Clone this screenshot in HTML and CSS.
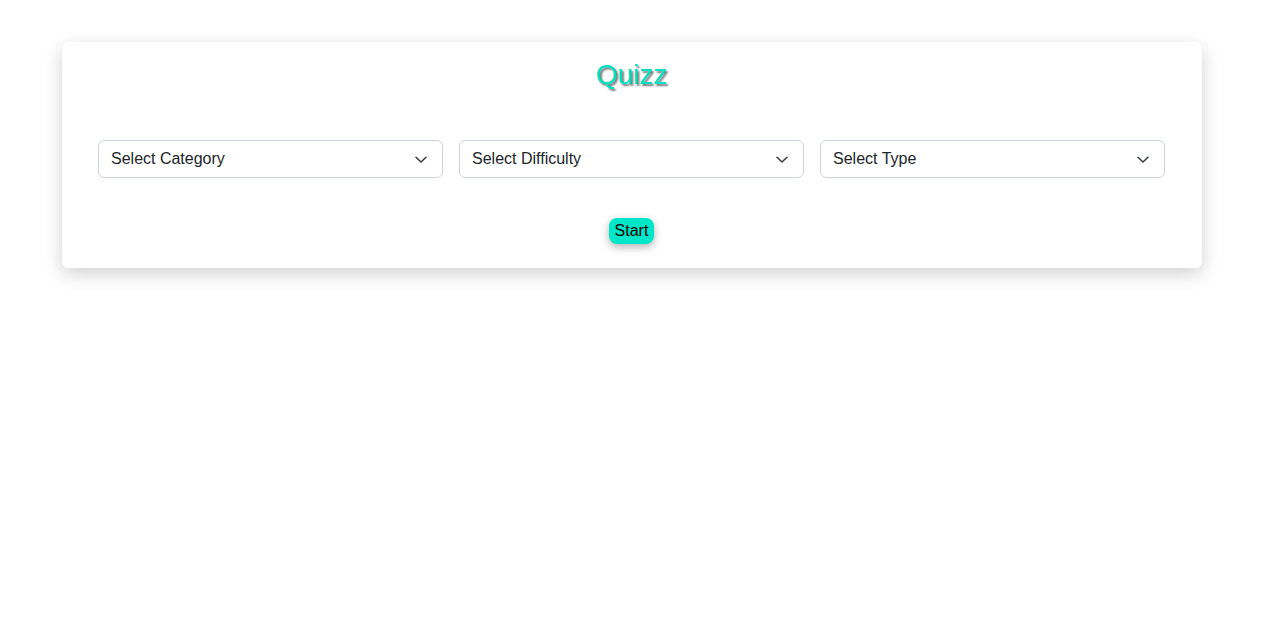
FILE: index.html
```html
<!DOCTYPE html>
<html lang="en">
<head>
<meta charset="utf-8">
<title>Quizz</title>
<link rel="stylesheet" href="styles.css">
</head>
<body>
<div class="card">
  <h1 class="title">Quizz</h1>
  <div class="selects">
    <select class="form-select"><option>Select Category</option></select>
    <select class="form-select"><option>Select Difficulty</option></select>
    <select class="form-select"><option>Select Type</option></select>
  </div>
  <div class="actions">
    <button class="start">Start</button>
  </div>
</div>
</body>
</html>
```
FILE: styles.css
```css
html {
  min-height: 100%;
}
body {
  margin: 0;
  min-height: 625px;
  font-family: "Liberation Sans", Arial, sans-serif;
  background: #ffffff;
  color: #212529;
}
.card {
  width: 1140px;
  box-sizing: border-box;
  margin: 42px 0 0 62px;
  background: #fff;
  border-radius: 6px;
  box-shadow: 0 6px 18px rgba(0, 0, 0, 0.18);
  padding: 15px 37px 24px 36px;
}
.title {
  margin: 0;
  text-align: center;
  font-size: 28px;
  line-height: 36px;
  font-weight: normal;
  color: #00e0c2;
  text-shadow: 2px 2px 2px rgba(0, 0, 0, 0.55);
}
.selects {
  display: flex;
  gap: 16px;
  margin-top: 47px;
}
.form-select {
  flex: 1;
  height: 38px;
  appearance: none;
  -webkit-appearance: none;
  font-family: "Liberation Sans", Arial, sans-serif;
  font-size: 16px;
  color: #212529;
  background-color: #fff;
  background-image: url("data:image/svg+xml,%3csvg xmlns='http://www.w3.org/2000/svg' viewBox='0 0 12 7'%3e%3cpath fill='none' stroke='%23343a40' stroke-linecap='round' stroke-linejoin='round' stroke-width='1.5' d='M1 1.2 6 6l5-4.8'/%3e%3c/svg%3e");
  background-repeat: no-repeat;
  background-position: right 15px center;
  background-size: 12px 7px;
  border: 1px solid #ced4da;
  border-radius: 6px;
  padding: 0 36px 1px 12px;
}
.actions {
  display: flex;
  justify-content: center;
  margin-top: 40px;
}
.start {
  font-family: "Liberation Sans", Arial, sans-serif;
  font-size: 16px;
  color: #000;
  background: #00e6c8;
  border: none;
  border-radius: 8px;
  height: 26px;
  padding: 0 6px;
  box-shadow: 0 3px 8px rgba(0, 0, 0, 0.3);
}
```
